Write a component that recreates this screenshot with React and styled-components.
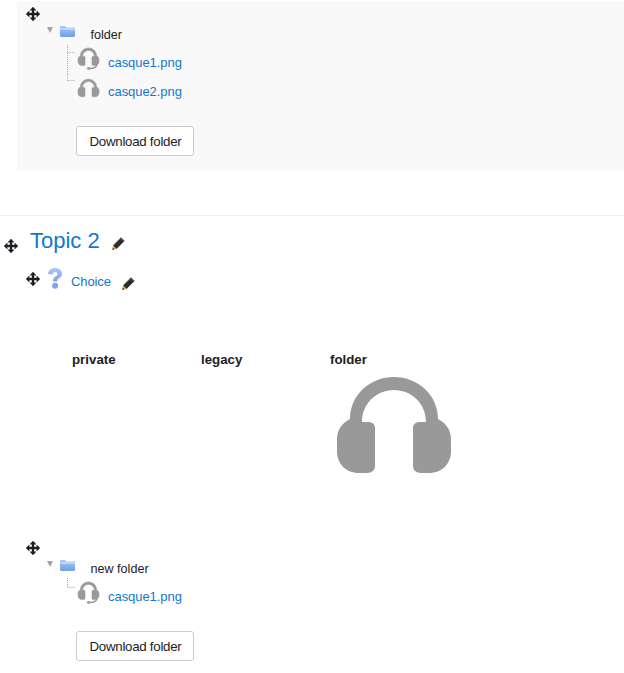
import styled, { createGlobalStyle } from 'styled-components';

const GlobalStyle = createGlobalStyle`
  html, body {
    margin: 0;
    padding: 0;
    background: #fff;
    overflow: hidden;
  }
  body {
    font-family: "Liberation Sans", Arial, sans-serif;
    font-size: 13px;
    color: #1d2125;
  }
`;

const Page = styled.div`
  width: 624px;
  height: 673px;
  padding-top: 1px;
  box-sizing: border-box;
  overflow: hidden;
`;

const Panel = styled.section`
  margin-left: 17px;
  height: 170px;
  padding: 6px 0 0 9px;
  box-sizing: border-box;
  background: #f9f9f9;
`;

const Divider = styled.hr`
  margin: 44px 0 0;
  border: 0;
  border-top: 1px solid #eeeeee;
`;

const TopicHeader = styled.div`
  display: flex;
  align-items: center;
  height: 50px;
  padding-left: 4px;
`;

const TopicMove = styled.span`
  display: flex;
  margin-top: 10px;
`;

const TopicTitle = styled.a`
  margin-left: 12px;
  font-size: 22px;
  line-height: 26px;
  color: #1177d1;
`;

const TopicEdit = styled.span`
  display: flex;
  margin: 4px 0 0 12px;
`;

const ActivityRow = styled.div`
  display: flex;
  align-items: flex-start;
  height: 86px;
  padding-left: 26px;
`;

const ActivityMove = styled.span`
  display: flex;
  margin: 6px 8px 0 0;
`;

const ActivityIcon = styled.svg`
  flex: none;
  margin-top: 2px;
`;

const ActivityLink = styled.a`
  margin: 8px 0 0 9px;
  font-size: 13px;
  letter-spacing: -0.1px;
  line-height: 16px;
  color: #1177d1;
`;

const ActivityEdit = styled.span`
  display: flex;
  margin: 11px 0 0 11px;
`;

const Cols = styled.div`
  display: flex;
  padding-left: 72px;
  height: 189px;
`;

const Col = styled.div`
  width: 129px;
`;

const ColTitle = styled.div`
  font-size: 13.3px;
  line-height: 16px;
  font-weight: 700;
`;

const ColImage = styled.div`
  display: flex;
  margin: 9px 0 0 7px;
`;

const FolderBlock = styled.section`
  padding-left: 26px;
`;

const MoveIcon = styled.svg`
  display: block;
  flex: none;
`;

const FolderRow = styled.div`
  display: flex;
  align-items: center;
  height: 20px;
  margin: 3px 0 0 21px;
`;

const Twisty = styled.span`
  width: 0;
  height: 0;
  margin: -8px 7px 0 0;
  border-left: 3.5px solid transparent;
  border-right: 3.5px solid transparent;
  border-top: 6px solid #a3a3a3;
`;

const FolderIcon = styled.svg`
  flex: none;
  margin-top: -5px;
`;

const FolderName = styled.span`
  margin: 2px 0 0 15.5px;
  font-size: 12.6px;
  line-height: 16px;
`;

const FileRow = styled.div`
  display: flex;
  align-items: center;
  height: ${({ $h }) => $h}px;
  margin-left: 41px;
`;

const Connector = styled.svg`
  flex: none;
  align-self: flex-start;
  overflow: visible;
`;

const FileIcon = styled.svg`
  flex: none;
  margin-left: 2px;
  overflow: visible;
`;

const FileLink = styled.a`
  margin: ${({ $top }) => $top}px 0 0 9px;
  font-size: 13px;
  letter-spacing: -0.05px;
  line-height: 16px;
  color: #1177d1;
`;

const Button = styled.button`
  display: block;
  width: 118px;
  height: 30px;
  margin: ${({ $top }) => $top}px 0 0 50px;
  padding: 0 0 0 1px;
  box-sizing: border-box;
  border: 1px solid #cccccc;
  border-radius: 3px;
  background: #fff;
  color: #1d2125;
  font-family: inherit;
  font-size: 13.3px;
  letter-spacing: -0.27px;
`;

const MovePath =
  'M7 0 L10 3.2 H8 V6 H10.8 V4 L14 7 L10.8 10 V8 H8 V10.8 H10 L7 14 L4 10.8 H6 V8 H3.2 V10 L0 7 L3.2 4 V6 H6 V3.2 H4 Z';

const HeadsetPath =
  'M13 42 C13 18 33 0 57 0 C81 0 101 18 101 42 C109 46 114 53 114 62 V74 C114 87 105 96 92 96 H84 C79 96 76 93 76 89 V51 C76 47 79 45 83 45 H89 C89 27 75 13 57 13 C39 13 25 27 25 45 H31 C35 45 38 47 38 51 V89 C38 93 35 96 30 96 H22 C9 96 0 87 0 74 V62 C0 53 5 46 13 42 Z';

const Move = () => (
  <MoveIcon width="14" height="14" viewBox="0 0 14 14">
    <path d={MovePath} fill="#1d2125" stroke="#1d2125" strokeWidth="0.4" />
  </MoveIcon>
);

const Pencil = () => (
  <svg width="13" height="13" viewBox="0 0 13 13">
    <path d="M9 0.5 L12.5 4 L4.5 12 L1 8.5 Z" fill="#2b2b2b" />
    <path d="M1 8.5 L4.5 12 L0.3 12.8 Z" fill="#d69a50" />
    <path d="M0.3 12.8 L1 10.8 L2.3 12.4 Z" fill="#1d2125" />
    <path d="M8.4 1.2 L1 8.5" stroke="#c98a3c" strokeWidth="0.7" />
    <path d="M9 0.5 L12.5 4 L11.5 5 L8 1.5 Z" fill="#555" />
  </svg>
);

const Headset = ({ mic }) =>
  mic ? (
    <FileIcon width="21" height="22" viewBox="0 0 114 120">
      <path d={HeadsetPath} fill="#999" stroke="#999" strokeWidth="3" />
      <path d="M104 90 C100 108 84 112 62 112" fill="none" stroke="#999" strokeWidth="7" />
      <rect x="48" y="105" width="20" height="13" rx="6" fill="#999" />
    </FileIcon>
  ) : (
    <FileIcon width="21" height="18" viewBox="0 0 114 96">
      <path d={HeadsetPath} fill="#999" stroke="#999" strokeWidth="3" />
    </FileIcon>
  );

const Folder = () => (
  <FolderIcon width="15" height="11" viewBox="0 0 15 11">
    <defs>
      <linearGradient id="folderFill" x1="0" y1="0" x2="0" y2="1">
        <stop offset="0" stopColor="#a9c9f5" />
        <stop offset="1" stopColor="#6f9fe6" />
      </linearGradient>
    </defs>
    <path d="M1 0 H5 L6.5 1.5 H14 Q15 1.5 15 2.5 V9.5 Q15 11 13.5 11 H1.5 Q0 11 0 9.5 V1 Q0 0 1 0 Z" fill="url(#folderFill)" />
    <path d="M0.5 3 H14.5" stroke="#e3eefc" strokeWidth="1" />
  </FolderIcon>
);

const Question = () => (
  <ActivityIcon width="14" height="21" viewBox="0 0 14 21">
    <defs>
      <linearGradient id="questionFill" x1="0" y1="0" x2="0" y2="1">
        <stop offset="0" stopColor="#a9c8f2" />
        <stop offset="1" stopColor="#7fa6e6" />
      </linearGradient>
    </defs>
    <path
      d="M7 0 C11 0 14 2.4 14 5.8 C14 8.4 12.4 9.6 10.8 10.6 C9.6 11.4 9.3 12 9.3 13.6 H5 C5 10.8 5.6 9.6 7.4 8.4 C8.8 7.5 9.5 7 9.5 5.9 C9.5 4.7 8.5 4 7 4 C5.5 4 4.5 4.9 4.3 6.5 L0 5.9 C0.5 2.3 3 0 7 0 Z"
      fill="url(#questionFill)"
    />
    <circle cx="7.1" cy="17.8" r="3" fill="#7fa6e6" />
  </ActivityIcon>
);

const Tree = ({ from, to, tick }) => (
  <Connector width="9" height="1" viewBox="0 0 9 1">
    <path
      d={`M0.5 ${from} V${to} M0.5 ${tick} H8`}
      fill="none"
      stroke="#aaa"
      strokeDasharray="1 1"
    />
  </Connector>
);

const File = ({ h, name, mic, line, top }) => (
  <FileRow $h={h}>
    <Tree {...line} />
    <Headset mic={mic} />
    <FileLink $top={top}>{name}</FileLink>
  </FileRow>
);

const App = () => (
  <Page>
    <GlobalStyle />
    <Panel>
      <Move />
      <FolderRow>
        <Twisty />
        <Folder />
        <FolderName>folder</FolderName>
      </FolderRow>
      <File h={30} name="casque1.png" mic top={8} line={{ from: 1, to: 30, tick: 8.5 }} />
      <File h={27} name="casque2.png" top={8} line={{ from: 0, to: 7, tick: 6.5 }} />
      <Button $top={25}>Download folder</Button>
    </Panel>
    <Divider />
    <TopicHeader>
      <TopicMove>
        <Move />
      </TopicMove>
      <TopicTitle>Topic 2</TopicTitle>
      <TopicEdit>
        <Pencil />
      </TopicEdit>
    </TopicHeader>
    <ActivityRow>
      <ActivityMove>
        <Move />
      </ActivityMove>
      <Question />
      <ActivityLink>Choice</ActivityLink>
      <ActivityEdit>
        <Pencil />
      </ActivityEdit>
    </ActivityRow>
    <Cols>
      <Col>
        <ColTitle>private</ColTitle>
      </Col>
      <Col>
        <ColTitle>legacy</ColTitle>
      </Col>
      <Col>
        <ColTitle>folder</ColTitle>
        <ColImage>
          <svg width="114" height="96" viewBox="0 0 114 96">
            <path d={HeadsetPath} fill="#999" />
          </svg>
        </ColImage>
      </Col>
    </Cols>
    <FolderBlock>
      <Move />
      <FolderRow>
        <Twisty />
        <Folder />
        <FolderName>new folder</FolderName>
      </FolderRow>
      <File h={29} name="casque1.png" mic top={8} line={{ from: 0, to: 9, tick: 9.5 }} />
      <Button $top={24}>Download folder</Button>
    </FolderBlock>
  </Page>
);

export default App;
